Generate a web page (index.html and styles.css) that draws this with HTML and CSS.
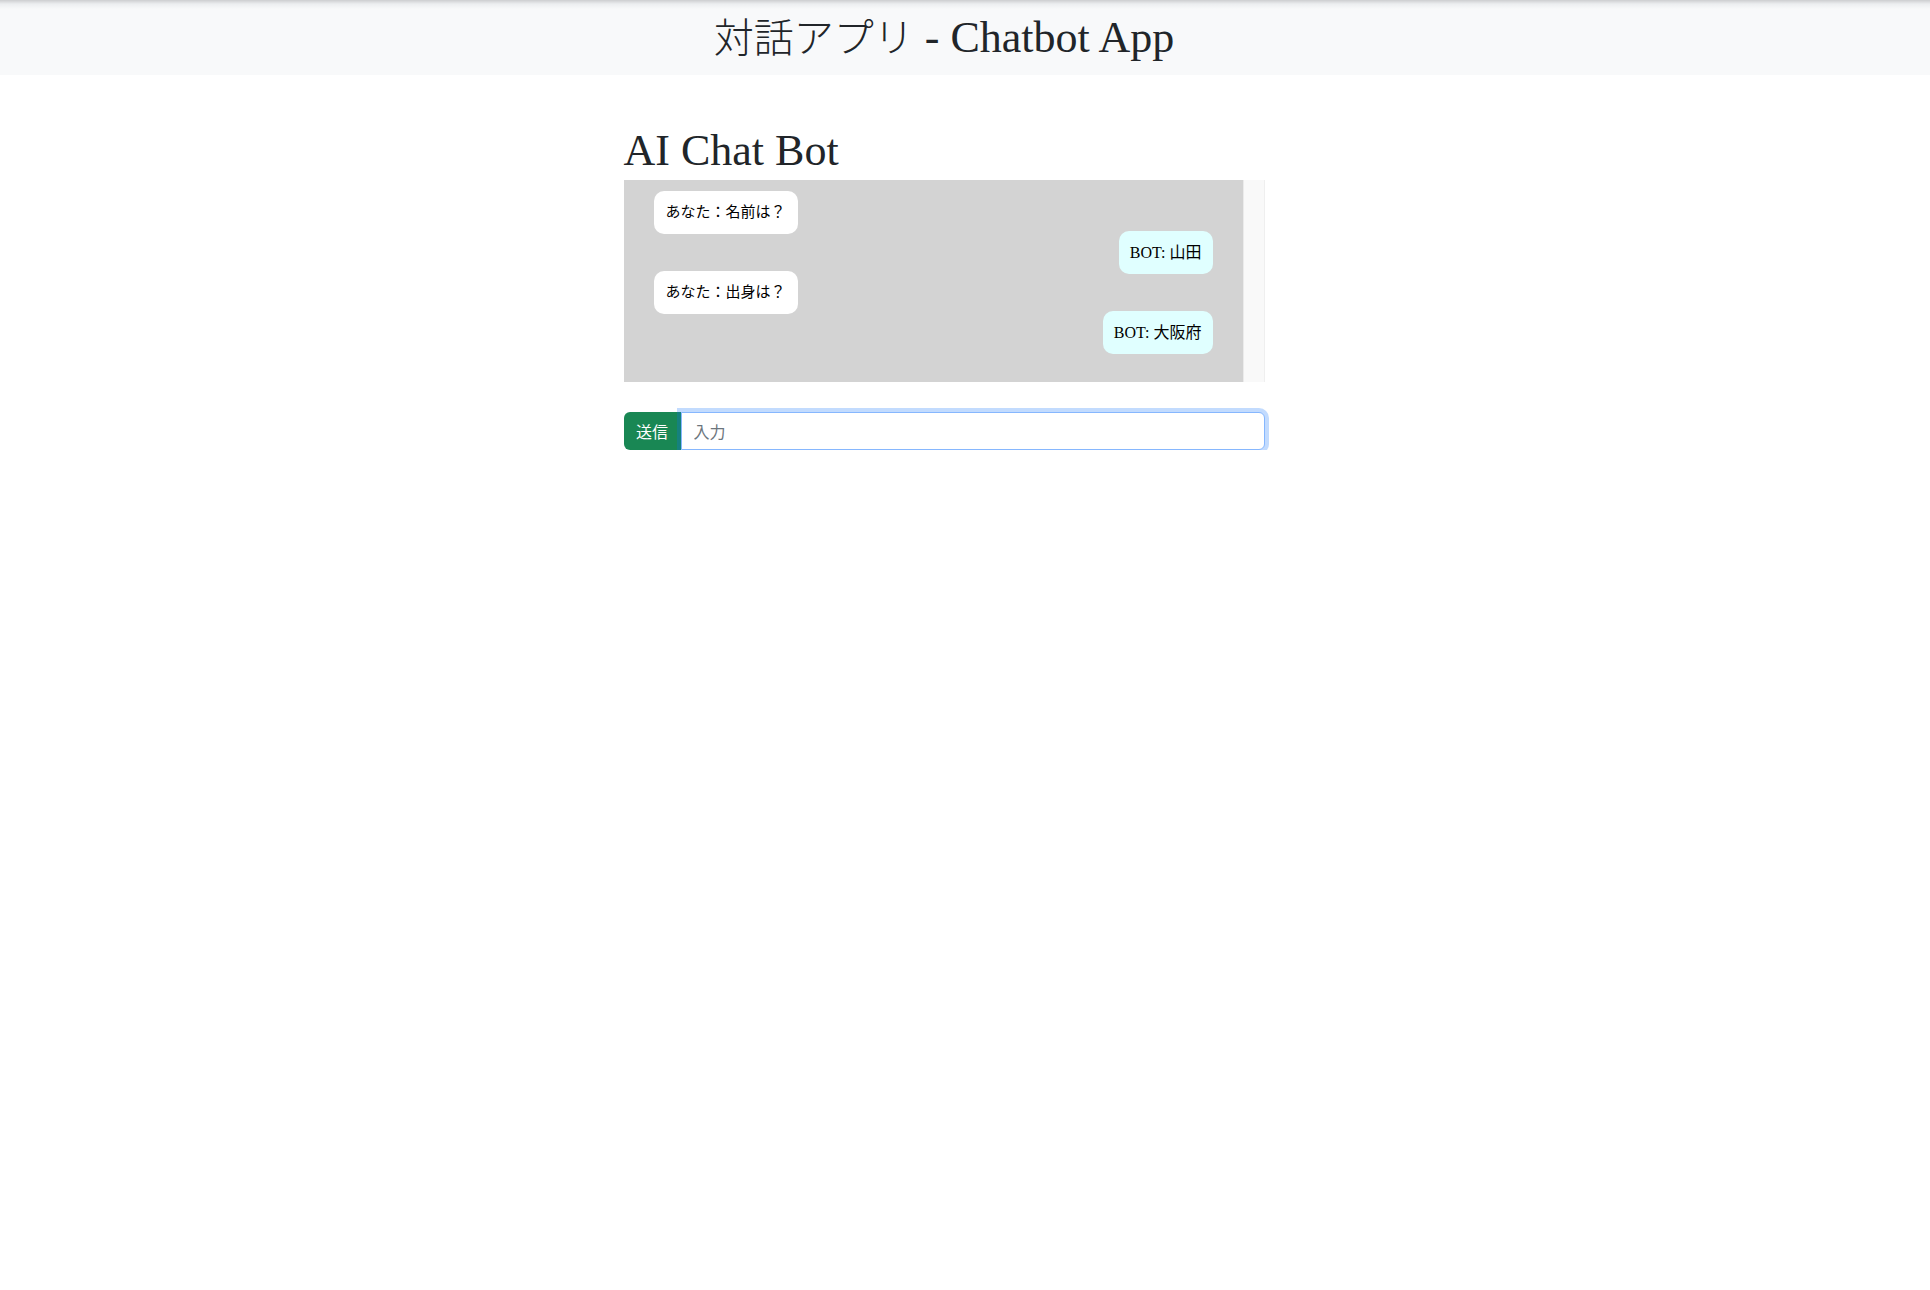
FILE: index.html
```html
<!DOCTYPE html>
<html lang="ja">
<head>
<meta charset="utf-8">
<title>対話アプリ - Chatbot App</title>
<link rel="stylesheet" href="styles.css">
</head>
<body>
<header class="app-header">
  <div class="app-header-inner"><span class="ja">対話アプリ</span> - Chatbot App</div>
</header>
<main class="page">
  <section class="chat-column">
    <h1 class="chat-title">AI Chat Bot</h1>
    <div class="chat-box">
      <div class="chat-messages">
        <div class="msg msg-user"><span class="bubble bubble-user">あなた：名前は？</span></div>
        <div class="msg msg-bot"><span class="bubble bubble-bot">BOT: 山田</span></div>
        <div class="msg msg-user"><span class="bubble bubble-user">あなた：出身は？</span></div>
        <div class="msg msg-bot"><span class="bubble bubble-bot">BOT: 大阪府</span></div>
      </div>
      <div class="chat-scroll-track"></div>
    </div>
    <form class="input-group" onsubmit="return false;">
      <button class="send-btn" type="submit">送信</button>
      <input class="chat-input is-focused" type="text" placeholder="入力" autofocus>
    </form>
  </section>
</main>
</body>
</html>
```
FILE: styles.css
```css
html, body {
  margin: 0;
  padding: 0;
  background: #ffffff;
}

body {
  font-family: "Liberation Serif", "Noto Sans CJK JP", serif;
  color: #212529;
}

.app-header {
  height: 75px;
  background: linear-gradient(to bottom, #cdced0 0px, #eceef0 4px, #f8f9fa 9px, #f8f9fa 100%);
}

.app-header-inner {
  width: 1888px;
  text-align: center;
  font-size: 44px;
  line-height: 76px;
  color: #212529;
}

.ja {
  font-family: "Noto Sans CJK JP", sans-serif;
  font-size: 40px;
  line-height: 1;
  font-weight: 300;
}

.page {
  width: 1888px;
  display: flex;
  justify-content: center;
}

.chat-column {
  width: 641px;
  display: flex;
  flex-direction: column;
}

.chat-title {
  margin: 50px 0 3px;
  font-size: 44px;
  line-height: 52px;
  font-weight: 400;
  color: #212529;
}

.chat-box {
  height: 202px;
  display: flex;
}

.chat-messages {
  flex: 1;
  min-width: 0;
  background: #d3d3d3;
  padding: 11px 30px 0;
  overflow: hidden;
}

.chat-scroll-track {
  flex: none;
  width: 20px;
  background: #f9f9f9;
  border-left: 1px solid #ebebeb;
  border-right: 1px solid #efefef;
}

.msg {
  display: flex;
  height: 40px;
}

.msg-bot {
  justify-content: flex-end;
}

.bubble {
  display: inline-block;
  height: 43px;
  line-height: 43px;
  padding: 0 12px;
  border-radius: 10px;
  font-size: 15px;
  color: #000000;
  white-space: nowrap;
}

.bubble-user {
  background: #ffffff;
}

.bubble-bot {
  background: #e0ffff;
  font-size: 16px;
  padding: 0 11px;
}

.input-group {
  margin: 30px 0 0;
  display: flex;
  height: 38px;
}

.send-btn {
  flex: none;
  border: 0;
  margin: 0;
  padding: 0 12.5px;
  height: 38px;
  background: #198754;
  color: #ffffff;
  font-family: "Noto Sans CJK JP", sans-serif;
  font-size: 16px;
  border-radius: 6px 0 0 6px;
}

.chat-input {
  position: relative;
  z-index: 2;
  flex: 1;
  min-width: 0;
  height: 38px;
  box-sizing: border-box;
  margin: 0;
  padding: 0 12px;
  border: 1px solid #ced4da;
  border-radius: 0 6px 6px 0;
  font-family: "Noto Sans CJK JP", sans-serif;
  font-size: 16px;
  color: #212529;
  background: #ffffff;
  outline: none;
}

.chat-input.is-focused,
.chat-input:focus {
  border-color: #86b7fe;
  box-shadow: 0 0 0 4px rgba(13, 110, 253, 0.25);
}

.chat-input::placeholder {
  color: #6c757d;
}
```
